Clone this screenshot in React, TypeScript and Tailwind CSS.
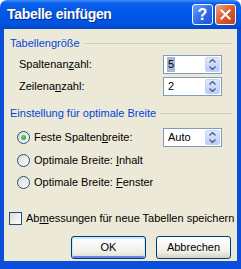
import React from 'react';

const font = { fontFamily: '"Liberation Sans", Arial, sans-serif' };

function Spin() {
  return (
    <div className="w-[15px] h-full flex flex-col rounded-[2px] overflow-hidden border border-[#c3d3fd] bg-[linear-gradient(to_bottom,#e0e9fc,#b9cdf7)]">
      <div className="flex-1 flex items-center justify-center">
        <svg width="7" height="4" viewBox="0 0 7 4">
          <path d="M0.5 3.5 L3.5 0.5 L6.5 3.5" fill="none" stroke="#4d6185" strokeWidth="1.4" />
        </svg>
      </div>
      <div className="flex-1 flex items-center justify-center">
        <svg width="7" height="4" viewBox="0 0 7 4">
          <path d="M0.5 0.5 L3.5 3.5 L6.5 0.5" fill="none" stroke="#4d6185" strokeWidth="1.4" />
        </svg>
      </div>
    </div>
  );
}

function SpinBox({ value, selected }: { value: string; selected?: boolean }) {
  return (
    <div className="w-[59px] h-[19px] border border-[#7f9db9] bg-white flex items-stretch p-[1px]">
      <div className="flex-1 flex items-center pl-[2px]">
        <span className={selected ? 'bg-[#a8b7d6] text-black px-[1px] leading-[15px]' : 'px-[1px]'}>{value}</span>
      </div>
      <Spin />
    </div>
  );
}

function Radio({ checked }: { checked?: boolean }) {
  return (
    <div className="w-[13px] h-[13px] shrink-0 rounded-full border border-[#1c5180] bg-[linear-gradient(135deg,#dcdcd5,#ffffff)] flex items-center justify-center">
      {checked && <div className="w-[5px] h-[5px] rounded-full bg-[radial-gradient(circle_at_35%_35%,#64d564,#1c9a1c)]" />}
    </div>
  );
}

function GroupHeader({ label }: { label: string }) {
  return (
    <div className="h-[14px] flex items-center pl-[6px] pr-[5px] gap-[4px]">
      <span className="text-[#0046d5] leading-[14px] whitespace-nowrap">{label}</span>
      <div className="flex-1 h-px bg-[#d0d0bf]" />
    </div>
  );
}

export default function App() {
  return (
    <div className="w-[241px] h-[269px] flex flex-col text-[11px] text-black whitespace-nowrap" style={font}>
      {/* Titelleiste */}
      <div className="h-[29px] rounded-t-[7px] flex items-center pl-[7px] pr-[5px] bg-[linear-gradient(to_bottom,#3b8cf6_0%,#0a5fea_12%,#0058e7_45%,#0054e0_80%,#0046c8_100%)]">
        <span className="flex-1 text-white font-bold text-[14px] tracking-[-0.3px] [text-shadow:1px_1px_0_#0a2a8a]">
          Tabelle einfügen
        </span>
        <div className="flex gap-[2px]">
          <div className="w-[21px] h-[21px] rounded-[3px] border border-white flex items-center justify-center bg-[linear-gradient(135deg,#6ea0fb,#2a66e4_60%,#1e55d0)]">
            <span className="text-white font-bold text-[16px] leading-none">?</span>
          </div>
          <div className="w-[21px] h-[21px] rounded-[3px] border border-white flex items-center justify-center bg-[linear-gradient(135deg,#f0a07d,#d9572e_55%,#c2401c)]">
            <svg width="11" height="11" viewBox="0 0 11 11">
              <path d="M1.5 1.5 L9.5 9.5 M9.5 1.5 L1.5 9.5" stroke="white" strokeWidth="2" strokeLinecap="square" />
            </svg>
          </div>
        </div>
      </div>

      {/* Rahmen + Inhalt */}
      <div className="flex-1 flex border-l-4 border-r-4 border-b-[8px] border-[#0b4ed9]">
        <div className="flex-1 min-w-0 overflow-hidden bg-[#ece9d8] flex flex-col pt-[7px]">
          <GroupHeader label="Tabellengröße" />

          <div className="mt-[5px] h-[19px] flex items-center justify-between pl-[15px] pr-[15px]">
            <span>
              Spaltenan<u>z</u>ahl:
            </span>
            <SpinBox value="5" selected />
          </div>
          <div className="mt-[3px] h-[19px] flex items-center justify-between pl-[15px] pr-[15px]">
            <span>
              Zeilena<u>n</u>zahl:
            </span>
            <SpinBox value="2" />
          </div>

          <div className="mt-[10px]">
            <GroupHeader label="Einstellung für optimale Breite" />
          </div>

          <div className="mt-[8px] h-[19px] flex items-center justify-between pl-[13px] pr-[15px]">
            <div className="flex items-center gap-[4px]">
              <Radio checked />
              <span>
                Feste Spalten<u>b</u>reite:
              </span>
            </div>
            <SpinBox value="Auto" />
          </div>
          <div className="mt-[4px] h-[19px] flex items-center gap-[4px] pl-[13px]">
            <Radio />
            <span>
              Optimale Breite: <u>I</u>nhalt
            </span>
          </div>
          <div className="mt-[3px] h-[19px] flex items-center gap-[4px] pl-[13px]">
            <Radio />
            <span>
              Optimale Breite: <u>F</u>enster
            </span>
          </div>

          <div className="mt-[17px] h-[19px] flex items-center gap-[4px] pl-[5px]">
            <div className="w-[13px] h-[13px] shrink-0 border border-[#1c5180] bg-[linear-gradient(135deg,#dcdcd5,#ffffff)]" />
            <span className="whitespace-nowrap">
              Ab<u>m</u>essungen für neue Tabellen speichern
            </span>
          </div>

          <div className="mt-[8px] flex justify-end gap-[10px] pr-[6px]">
            <button className="w-[75px] h-[23px] rounded-[3px] border border-[#003c74] bg-[linear-gradient(to_bottom,#ffffff,#f0f0ea_70%,#dcdad0)] shadow-[inset_0_1px_0_1px_#cee7ff,inset_0_-1px_0_1px_#6982ee]">
              OK
            </button>
            <button className="w-[75px] h-[23px] rounded-[3px] border border-[#003c74] bg-[linear-gradient(to_bottom,#ffffff,#f0f0ea_70%,#d6d0c5)]">
              Abbrechen
            </button>
          </div>
        </div>
      </div>
    </div>
  );
}
